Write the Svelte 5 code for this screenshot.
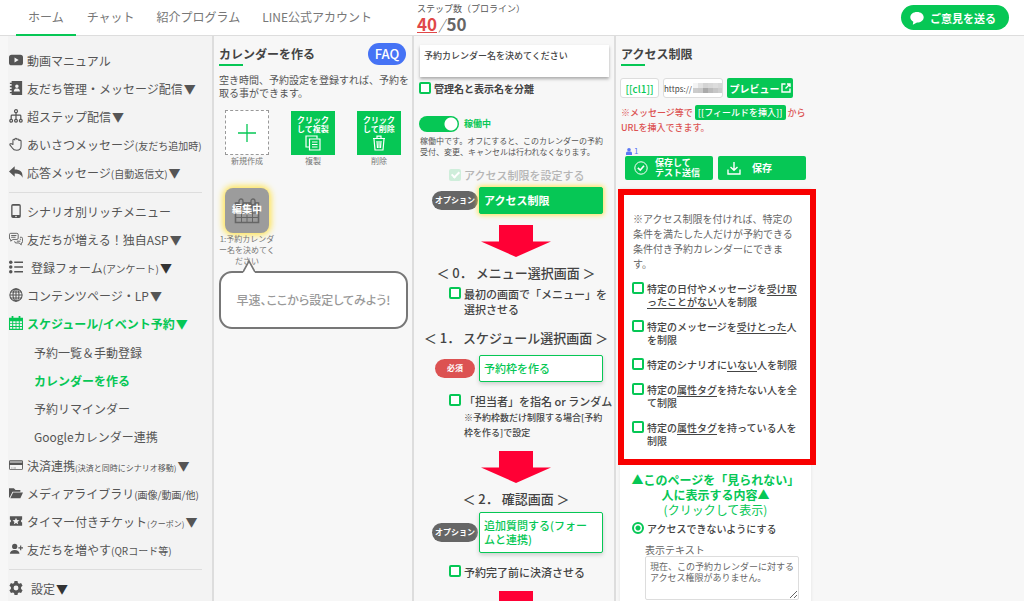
<script>
  const tabs = ['ホーム', 'チャット', '紹介プログラム', 'LINE公式アカウント'];

  const groups = [
    [
      { icon: 'video', text: '動画マニュアル' },
      { icon: 'book', text: '友だち管理・メッセージ配信', more: true },
      { icon: 'tree', text: '超ステップ配信', more: true },
      { icon: 'hand', text: 'あいさつメッセージ', note: '(友だち追加時)' },
      { icon: 'reply', text: '応答メッセージ', note: '(自動返信文)', more: true }
    ],
    [
      { icon: 'phone', text: 'シナリオ別リッチメニュー' },
      { icon: 'chat', text: '友だちが増える！独自ASP', more: true },
      { icon: 'list', text: '登録フォーム', note: '(アンケート)', more: true, dark: true, wide: true },
      { icon: 'globe', text: 'コンテンツページ・LP', more: true },
      {
        icon: 'calendar',
        text: 'スケジュール/イベント予約',
        more: true,
        active: true,
        children: [
          { text: '予約一覧＆手動登録' },
          { text: 'カレンダーを作る', active: true },
          { text: '予約リマインダー' },
          { text: 'Googleカレンダー連携' }
        ]
      },
      { icon: 'card', text: '決済連携', note: '(決済と同時にシナリオ移動)', size: 'tiny', more: true },
      { icon: 'folder', text: 'メディアライブラリ', note: '(画像/動画/他)' },
      { icon: 'ticket', text: 'タイマー付きチケット', note: '(クーポン)', size: 'tiny', more: true },
      { icon: 'adduser', text: '友だちを増やす', note: '(QRコード等)' }
    ],
    [{ icon: 'gear', text: '設定', more: true, dark: true, wide: true }]
  ];

  const limits = [
    ['特定の日付やメッセージを', '受け取ったことがない', '人を制限'],
    ['特定のメッセージを', '受けとった', '人を制限'],
    ['特定のシナリオに', 'いない', '人を制限'],
    ['特定の', '属性タグ', 'を持たない人を全て制限'],
    ['特定の', '属性タグ', 'を持っている人を制限']
  ];

  const mosaic = ['#f4f4f4', '#e2e2e2', '#d4d4d4', '#d8d8d8', '#ddd', '#d8d8d8', '#ccc', '#c9c9c9', '#aaa', '#bbb', '#c6c6c6', '#cecece'];
</script>

{#snippet icon(name)}
  <svg class="icon" viewBox="0 0 16 16" aria-hidden="true" fill="currentColor">
    {#if name === 'video'}
      <path fill-rule="evenodd" d="M3 2h10q3 0 3 3v6q0 3-3 3H3q-3 0-3-3V5q0-3 3-3zM6.3 5.2v5.6L11 8z" />
    {:else if name === 'book'}
      <path fill-rule="evenodd" d="M3 0h12v16H3v-2H1v-1.500h2v-2H1V9h2V7H1V5.500h2v-2H1V2h2zM9 4a2 2 0 100 4 2 2 0 000-4zM5.500 12h7c0-3-2-3.500-3.500-3.500S5.500 9 5.500 12z" />
    {:else if name === 'tree'}
      <g fill="none" stroke="currentColor" stroke-width="1.400"><circle cx="8" cy="2.500" r="1.700" /><path d="M8 4.500V12M2.500 12V8q0-1 1-1h9q1 0 1 1v4" /><circle cx="2.500" cy="13.500" r="1.600" /><circle cx="8" cy="13.500" r="1.600" /><circle cx="13.500" cy="13.500" r="1.600" /></g>
    {:else if name === 'hand'}
      <path fill="none" stroke="currentColor" stroke-width="1.200" stroke-linejoin="round" stroke-linecap="round" d="M4.500 8.500V3.300q1.200-1.300 2.200 0V2q1.200-1.300 2.300 0v.8q1.200-1.200 2.300 0V4q1.500-1 2.500.4V10q0 5.200-5 5.200-3.600 0-5-2.600L1 9q0-1.900 1.800-1.200z" />
    {:else if name === 'reply'}
      <path d="M6.500 1.500v3.700C12.500 5.200 16 7.500 15.500 14.500 14 11 11.500 9.600 6.500 9.700v3.600L0 7.400z" />
    {:else if name === 'phone'}
      <path fill-rule="evenodd" d="M4.500 0h7q2 0 2 2v12q0 2-2 2h-7q-2 0-2-2V2q0-2 2-2zM4 2v10.500h8V2zM8 13.300a.9.9 0 100 1.800.9.9 0 000-1.800z" />
    {:else if name === 'chat'}
      <g fill="none" stroke="currentColor" stroke-width="1"><path d="M2 1.500h7q1.500 0 1.500 1.500v4q0 1.500-1.500 1.500H4.500L2 10.500v-2Q.5 8.500.5 7V3Q.5 1.500 2 1.500zM12.500 6h1.500q1.500 0 1.500 1.500V11q0 1.500-1.500 1.500v2.200L11.500 12.500H8Q6.500 12.500 6.500 11v-.5" /><path d="M2.500 4h6M2.500 6h5M9 10.500h4M12.300 8.300h1.500" /></g>
    {:else if name === 'list'}
      <circle cx="2" cy="2.500" r="2" /><circle cx="2" cy="8" r="2" /><circle cx="2" cy="13.500" r="2" /><path d="M6 1.700h10v1.800H6zM6 7.100h10v1.800H6zM6 12.600h10v1.800H6z" />
    {:else if name === 'globe'}
      <g fill="none" stroke="currentColor" stroke-width="1.200"><circle cx="8" cy="8" r="7" /><ellipse cx="8" cy="8" rx="3.400" ry="7" /><path d="M8 1v14M1 8h14M2 4.500h12M2 11.500h12" /></g>
    {:else if name === 'calendar'}
      <path fill-rule="evenodd" d="M3 0h2v2h6V0h2v2h3v14H0V2h3zM1.200 6v2.200h2.500V6zm3.600 0v2.200h2.700V6zm3.700 0v2.200h2.700V6zm3.800 0v2.200h2.500V6zM1.200 9.200v2.200h2.500V9.200zm3.600 0v2.200h2.700V9.200zm3.700 0v2.200h2.700V9.200zm3.800 0v2.200h2.500V9.200zM1.200 12.500v2.200h2.500v-2.200zm3.600 0v2.200h2.700v-2.200zm3.700 0v2.200h2.700v-2.200zm3.800 0v2.200h2.500v-2.200z" />
    {:else if name === 'card'}
      <path fill-rule="evenodd" d="M1.500 2.500h13q1.500 0 1.500 1.500v8q0 1.500-1.500 1.500h-13Q0 13.500 0 12V4q0-1.500 1.500-1.500zM1 4v1h14V4zm0 4v4.500h14V8zm1.500 3h1.500v.8H2.500zm2.500 0h3v.8H5z" />
    {:else if name === 'folder'}
      <path d="M0 2.500h5.500l2 2H13V6.500H4L.8 13H0zM4.700 7.500H16L13 14H1.500z" />
    {:else if name === 'ticket'}
      <path fill-rule="evenodd" d="M1 2.500h14v3.700a1.900 1.900 0 000 3.600v3.700H1V9.800a1.900 1.900 0 000-3.600zM8 4.200L6.900 6.900 4 7.100l2.200 1.900-.7 2.800L8 10.300l2.500 1.500L9.800 9 12 7.100l-2.900-.2z" />
    {:else if name === 'adduser'}
      <circle cx="6.500" cy="5" r="3" /><path d="M1 13.500c0-3 2.500-4.500 5.500-4.500s5.500 1.500 5.500 4.500zM12.700 4h1.300v2h2v1.300h-2v2h-1.300v-2h-2V6h2z" />
    {:else if name === 'gear'}
      <path fill-rule="evenodd" d="M6.300 0h3.400l.5 2.200 1.400.8 2.200-.7 1.700 3-1.700 1.600v2.200l1.700 1.600-1.700 3-2.200-.7-1.400.8-.5 2.200H6.300l-.5-2.200-1.400-.8-2.200.7-1.700-3 1.700-1.600V6.900L.5 5.300l1.700-3 2.200.7 1.400-.8zM8 5.200a2.800 2.800 0 100 5.600 2.800 2.800 0 000-5.600z" />
    {/if}
  </svg>
{/snippet}

{#snippet arrow()}
  <svg class="arrow" viewBox="0 0 70 32" aria-hidden="true"><path d="M18 0h34v16.500h18L35 32 0 16.500h18z" fill="#ff0035" /></svg>
{/snippet}

<div class="page">
  <header>
    <nav class="tabs">
      {#each tabs as tab, i}
        <a href="#top" class:current={i === 0}>{tab}</a>
      {/each}
    </nav>
    <div class="steps">
      <span>ステップ数（プロライン）</span>
      <div class="count"><a href="#steps">40</a><i>/</i><b>50</b></div>
    </div>
    <button class="feedback">
      <svg viewBox="0 0 14 14" aria-hidden="true"><path d="M7 1c3.800 0 6.700 2.200 6.700 5.300S10.800 11.600 7 11.600L2.800 13.700l.5-3C1.400 9.700.3 8.200.3 6.300.3 3.200 3.200 1 7 1z" fill="#fff" /></svg>
      ご意見を送る
    </button>
  </header>

  <main>
    <aside class="side">
      {#each groups as group}
        <ul class="menu">
          {#each group as item}
            <li>
              <a href="#menu" class:active={item.active} class:wide={item.wide}>
                {@render icon(item.icon)}
                <span>{item.text}{#if item.note}<small class={item.size}>{item.note}</small>{/if}{#if item.more}<span class="more" class:dark={item.dark}>▼</span>{/if}</span>
              </a>
              {#if item.children}
                <ul class="sub">
                  {#each item.children as child}
                    <li><a href="#menu" class:active={child.active}>{child.text}</a></li>
                  {/each}
                </ul>
              {/if}
            </li>
          {/each}
        </ul>
      {/each}
    </aside>

    <section class="col calendars">
      <div class="headrow">
        <h2>カレンダーを作る</h2>
        <button class="faq">FAQ</button>
      </div>
      <p class="lead">空き時間、予約設定を登録すれば、予約を<br />取る事ができます。</p>
      <div class="tiles">
        <div class="cell">
          <button class="tile add" aria-label="新規作成">
            <svg width="18" height="18" viewBox="0 0 18 18"><path d="M9 0v18M0 9h18" stroke="#06c755" stroke-width="1.300" /></svg>
          </button>
          <span>新規作成</span>
        </div>
        <div class="cell">
          <button class="tile green">クリック<br />して複製
            <svg width="16" height="16" viewBox="0 0 16 16" fill="none" stroke="#fff" stroke-width="1.200"><path d="M12 3.500V1H1v11h3" /><path d="M4.500 4h10.500v11H4.500zM7 7h5.500M7 9.500h5.500M7 12h5.500" /></svg>
          </button>
          <span>複製</span>
        </div>
        <div class="cell">
          <button class="tile green">クリック<br />して削除
            <svg width="16" height="16" viewBox="0 0 16 16" fill="none" stroke="#fff" stroke-width="1.200"><path d="M2 3.500h12M6 3V1.200h4V3M3 4l1 11h8l1-11M6 6l.5 7M8 6v7M10 6l-.5 7" /></svg>
          </button>
          <span>削除</span>
        </div>
      </div>
      <div class="tiles second">
        <div class="cell">
          <button class="tile editing">
            <svg width="26" height="26" viewBox="0 0 26 26" fill="none" stroke="#666"><path d="M1.500 5h23v19.500h-23z" stroke-width="1.600" /><path d="M2 4.500h22V10H2z" fill="#666" stroke="none" /><path d="M2 15h22M2 19.500h22M7.500 10v14M13 10v14M18.500 10v14" /><rect x="5" y="1" width="4" height="6" rx="2" fill="#9c9c9c" stroke-width="1.300" /><rect x="17" y="1" width="4" height="6" rx="2" fill="#9c9c9c" stroke-width="1.300" /></svg>
            <b>編集中</b>
          </button>
          <span class="name">1:予約カレンダー名を決めてください</span>
        </div>
      </div>
      <div class="bubble">
        <svg viewBox="0 0 12 13" width="12" height="13" aria-hidden="true"><path d="M0 12L6 1l6 11v1H0z" fill="#fff" /><path d="M0 12L6 1l6 11" fill="none" stroke="#777" stroke-width="1.600" /></svg>
        早速、ここから設定してみよう!
      </div>
    </section>

    <section class="col flow">
      <textarea class="title" aria-label="カレンダー名">予約カレンダー名を決めてください</textarea>
      <label class="check split"><input type="checkbox" /><span>管理名と表示名を分離</span></label>
      <label class="switch"><input type="checkbox" checked /><span>稼働中</span></label>
      <p class="help">稼働中です。オフにすると、このカレンダーの予約受付、変更、キャンセルは行われなくなります。</p>
      <label class="check in locked"><input type="checkbox" checked disabled /><span>アクセス制限を設定する</span></label>
      <div class="step"><span class="pill">オプション</span><button class="solid">アクセス制限</button></div>
      {@render arrow()}
      <h3>＜ 0． メニュー選択画面 ＞</h3>
      <label class="check in"><input type="checkbox" /><span>最初の画面で「メニュー」を選択させる</span></label>
      <h3 class="next">＜ 1． スケジュール選択画面 ＞</h3>
      <div class="step apart"><span class="pill must">必須</span><button>予約枠を作る</button></div>
      <label class="check in below"><input type="checkbox" /><span><span class="line">「担当者」を指名 or ランダム</span><small>※予約枠数だけ制限する場合[予約<wbr />枠を作る]で設定</small></span></label>
      {@render arrow()}
      <h3>＜ 2． 確認画面 ＞</h3>
      <div class="step"><span class="pill">オプション</span><button>追加質問する(フォー<br />ムと連携)</button></div>
      <label class="check in below"><input type="checkbox" /><span>予約完了前に決済させる</span></label>
      {@render arrow()}
    </section>

    <section class="col access">
      <div class="inner">
        <h2>アクセス制限</h2>
        <div class="links">
          <button class="code">[[cl1]]</button>
          <div class="url">
            <input type="text" value="https://" aria-label="URL" />
            <span class="mosaic">{#each mosaic as shade}<i style="background:{shade}"></i>{/each}</span>
          </div>
          <button class="preview">プレビュー<svg width="10" height="10" viewBox="0 0 10 10" fill="none" stroke="#fff" stroke-width="1.400"><path d="M4.500 1H1v8h8V5.500M6 1h3v3M9 1L4.500 5.500" /></svg></button>
        </div>
        <p class="warn">※メッセージ等で <button>[[フィールドを挿入]]</button> から<br />URLを挿入できます。</p>
        <div class="users"><svg width="6" height="7" viewBox="0 0 6 7" fill="currentColor"><circle cx="3" cy="1.800" r="1.800" /><path d="M0 7V5q0-1.500 1.500-1.500h3Q6 3.500 6 5v2z" /></svg>1</div>
        <div class="save">
          <button>
            <svg width="14" height="14" viewBox="0 0 14 14" fill="none" stroke="#fff"><circle cx="7" cy="7" r="6.200" /><path d="M3.800 6.800L6.300 9 10 4.800" stroke-width="1.600" /></svg>
            <span>保存して<br />テスト送信</span>
          </button>
          <button class="plain">
            <svg width="14" height="14" viewBox="0 0 14 14" fill="none" stroke="#fff" stroke-width="1.400"><path d="M7 1v8M3.500 6L7 9.300 10.500 6M1 8.500V13h12V8.500" /></svg>
            <span>保存</span>
          </button>
        </div>
        <div class="panel">
          <div class="marked">
            <p>※アクセス制限を付ければ、特定の条件を満たした人だけが予約できる条件付き予約カレンダーにできます。</p>
            {#each limits as [before, mark, after]}
              <label class="check"><input type="checkbox" /><span>{before}<u>{mark}</u>{after}</span></label>
            {/each}
          </div>
          <button class="fold"><b>▲このページを「見られない」<br />人に表示する内容▲</b><br />(クリックして表示)</button>
          <label class="check radio"><input type="radio" name="deny" checked /><span>アクセスできないようにする</span></label>
          <div class="field">
            <label for="deny-text">表示テキスト</label>
            <textarea id="deny-text">現在、この予約カレンダーに対するアクセス権限がありません。</textarea>
          </div>
        </div>
      </div>
    </section>
  </main>
</div>

<style>
  :global(body) { margin: 0; }
  * { box-sizing: border-box; }
  .page {
    --green: #06c755;
    height: 100vh;
    display: flex;
    flex-direction: column;
    overflow: hidden;
    background: #f7f7f7;
    color: #444;
    font-family: "Noto Sans CJK JP", "Noto Sans", sans-serif;
    font-size: 12px;
  }
  button, input, textarea { font: inherit; color: inherit; margin: 0; }
  button { border: 0; padding: 0; cursor: pointer; }
  a { color: inherit; text-decoration: none; }
  ul { list-style: none; margin: 0; padding: 0; }
  h2, h3, p { margin: 0; }
  svg { display: block; flex: none; }

  header {
    flex: none;
    display: grid;
    grid-template-columns: 417fr 607fr;
    height: 36px;
    background: #fff;
    border-bottom: 1px solid #ddd;
    position: relative;
  }
  .tabs { display: flex; padding-left: 16px; white-space: nowrap; color: #777; }
  .tabs a { padding: 0 11px; line-height: 34px; border-bottom: 2px solid transparent; }
  .tabs .current { border-color: var(--green); padding: 0 12px; }
  .steps { font-size: 9px; line-height: 12px; padding-top: 3px; color: #555; }
  .count { display: flex; align-items: center; font-size: 17px; line-height: 18px; color: #666; }
  .count a { color: #e04848; font-weight: 700; border-bottom: 1px solid; line-height: 17px; }
  .count i { font-size: 14px; font-weight: 300; padding: 0 2px; }
  .feedback {
    position: absolute;
    right: 15px;
    top: 5px;
    display: flex;
    align-items: center;
    gap: 6px;
    height: 25px;
    padding: 0 13px 0 9px;
    border-radius: 13px;
    background: var(--green);
    color: #fff;
    font-weight: 700;
    font-size: 11px;
    line-height: 24px;
  }
  .feedback svg { width: 14px; }

  main {
    flex: 1;
    min-height: 0;
    display: grid;
    grid-template-columns: minmax(0, 214fr) minmax(0, 200fr) minmax(0, 202fr) minmax(0, 408fr);
  }
  .side, .col { overflow: hidden auto; scrollbar-width: none; }
  .side { margin-left: 8px; padding: 10px 10px 0 1px; background: #f3f3f3; border-right: 2px solid #ddd; color: #555; }
  .menu + .menu { border-top: 1px solid #ddd; margin-top: 6px; padding-top: 4px; }
  .menu a { display: flex; align-items: center; gap: 4px; height: 28px; white-space: nowrap; }
  .menu a.wide { gap: 8px; }
  .menu .icon { width: 14px; height: 14px; }
  .menu .active { color: var(--green); font-weight: 700; }
  .menu small { font-size: 10px; }
  .menu small.tiny { font-size: 8px; }
  .more { margin-left: 1px; }
  .dark { color: #333; }
  .sub { padding: 1px 0 1px 25px; }

  .col { border-right: 2px solid #ddd; padding: 9px 0 0; }
  h2 { font-size: 12px; line-height: 18px; font-weight: 700; }
  h2::after { content: ""; display: block; width: 24px; height: 2px; margin-top: 1px; background: var(--green); }

  .calendars { padding-top: 7px; }
  .headrow { display: flex; justify-content: space-between; align-items: flex-start; padding: 0 6px 0 5px; }
  .headrow h2 { padding-top: 2px; }
  .faq { height: 22px; width: 38px; border-radius: 11px; background: #4673f5; color: #fff; font-weight: 500; font-size: 13px; line-height: 20px; }
  .lead { padding-left: 5px; margin-top: 7px; font-size: 10px; line-height: 13px; color: #555; white-space: nowrap; }
  .tiles { display: grid; grid-template-columns: repeat(3, 1fr); margin-top: 11px; }
  .tiles.second { margin-top: 21px; }
  .cell { display: flex; flex-direction: column; align-items: center; font-size: 8px; line-height: 12px; color: #777; text-align: center; }
  .tile { width: 44px; height: 45px; display: flex; flex-direction: column; align-items: center; justify-content: center; }
  .add { background: #fff; border: 1px dashed #999; }
  .green { background: var(--green); color: #fff; font-weight: 700; line-height: 9px; border: 1px solid #f7f7f7; border-width: 1px 0 0; }
  .green svg { margin-top: 2px; }
  .editing { display: grid; place-items: center; background: #9c9c9c; border-radius: 8px; box-shadow: 0 0 6px 2px #ffe34d; color: #fff; font-size: 10px; }
  .editing svg, .editing b { grid-area: 1 / 1; }
  .editing b { padding-bottom: 3px; }
  .name { width: 56px; line-height: 11px; }
  .bubble {
    position: relative;
    margin: 5px 4px 0 5px;
    padding: 18px 0;
    border: 2px solid #777;
    border-radius: 13px;
    background: #fff;
    color: #999;
    font-size: 12px;
    font-weight: 500;
    line-height: 18px;
    text-align: center;
    font-feature-settings: "palt";
    white-space: nowrap;
  }
  .bubble svg { position: absolute; left: 22px; top: -13px; }

  textarea { display: block; outline: 0; }
  .title {
    width: calc(100% - 11px);
    height: 32px;
    margin-left: 6px;
    padding: 4px;
    border: 0;
    background: #fff;
    box-shadow: 0 2px 3px #aaa;
    font-size: 9px;
    font-weight: 500;
    line-height: 14px;
    resize: none;
    overflow: hidden;
  }
  .check { display: flex; gap: 3px; font-weight: 700; }
  .check input {
    appearance: none;
    flex: none;
    width: 12px;
    height: 12px;
    border: 2px solid var(--green);
    border-radius: 2px;
    background: #fff;
  }
  .split { margin: 5px 0 0 5px; font-size: 10px; line-height: 14px; }
  .switch { display: flex; align-items: center; gap: 5px; margin: 20px 0 0 5px; font-size: 9px; line-height: 16px; font-weight: 700; color: var(--green); }
  .switch input { appearance: none; width: 40px; height: 16px; border-radius: 8px; background: radial-gradient(circle at 32px 8px, #fff 6px, transparent 7px) var(--green); }
  .help { margin: 3px 6px 0; font-size: 8px; line-height: 11px; color: #555; }
  .in { padding: 0 6px 0 35px; margin-top: 5px; font-size: 11px; line-height: 15px; font-weight: 500; }
  .in small { display: block; margin-top: 1px; padding-right: 4px; font-size: 9px; }
  .line { white-space: nowrap; }
  .locked { margin-top: 11px; color: #b5b5b5; }
  .locked input { margin-top: 1px; border: 0; background: #cfeedb; }
  .locked input::after { content: ""; display: block; width: 3px; height: 6px; margin: 1px auto; border: solid #fff; border-width: 0 2px 2px 0; rotate: 45deg; }
  .below { margin-top: 12px; }
  .step { display: grid; grid-template-columns: 46px 1fr; align-items: center; gap: 1px; margin: 4px 11px 0 18px; }
  .apart { margin-top: 8px; }
  .pill { height: 19px; border-radius: 10px; background: #666; color: #fff; font-size: 8px; font-weight: 700; line-height: 18px; text-align: center; }
  .must { margin: 0 3px; background: #dc5252; }
  .step button {
    min-height: 26px;
    padding: 5px 4px 6px;
    border: 1px solid var(--green);
    border-radius: 2px;
    background: #fff;
    box-shadow: 0 2px 4px #ccc;
    color: var(--green);
    font-size: 11px;
    font-weight: 500;
    line-height: 14px;
    text-align: left;
  }
  .step .solid { background: var(--green); color: #fff; font-weight: 700; box-shadow: 0 0 5px 1px #ffe34d; }
  .arrow { width: 70px; height: 32px; margin: 11px auto 7px; translate: 2px 0; }
  h3 { padding-left: 4px; font-size: 13px; line-height: 18px; font-weight: 500; text-align: center; white-space: nowrap; }
  .next { margin-top: 12px; }

  .access { border: 0; }
  .inner { max-width: 200px; padding-left: 4px; }
  .inner h2 { padding-left: 1px; }
  .links { display: flex; gap: 4px; height: 20px; margin: 12px 0 7px; }
  .code, .url { border: 1px solid #ddd; border-radius: 3px; background: #fff; }
  .code { width: 39px; font-size: 10px; color: var(--green); font-weight: 500; }
  .url { display: flex; align-items: center; width: 60px; overflow: hidden; }
  .url input { width: 29px; border: 0; padding: 0; background: none; font-size: 8px; outline: 0; }
  .mosaic { display: grid; grid-template-columns: repeat(6, 5px); grid-auto-rows: 5px; }
  .preview { display: flex; align-items: center; justify-content: center; gap: 1px; width: 66px; border-radius: 2px; background: var(--green); color: #fff; font-size: 10px; font-weight: 700; white-space: nowrap; }
  .warn { padding-left: 1px; font-size: 9px; line-height: 15px; font-weight: 500; color: #dc5252; white-space: nowrap; }
  .warn button { padding: 0 3px; border-radius: 2px; background: var(--green); color: #fff; line-height: 15px; }
  .users { display: flex; align-items: center; gap: 2px; margin: 11px 0 0 6px; color: #5b78f5; font-size: 8px; line-height: 10px; }
  .save { display: grid; grid-template-columns: 88px 88px; gap: 5px; padding-left: 5px; }
  .save button { display: flex; align-items: center; gap: 7px; height: 24px; padding-left: 9px; border-radius: 2px; background: var(--green); color: #fff; font-size: 9px; line-height: 10px; font-weight: 700; text-align: left; }
  .save .plain { gap: 11px; font-size: 10px; }
  .panel { margin: 9px 5px 0 0; padding-bottom: 20px; background: #fff; box-shadow: 0 0 3px #e2e2e2; }
  .marked { margin: 0 -5px 0 -2px; padding: 16px 9px 12px 8px; border: 6px solid #f80000; display: flex; flex-direction: column; gap: 12px; font-size: 10px; line-height: 13px; }
  .marked p { line-height: 15px; margin-bottom: -1px; padding-left: 1px; color: #666; }
  .marked .check { font-weight: 500; }
  u { text-underline-offset: 2px; }
  .fold { display: block; width: 100%; margin-top: 7px; background: none; color: var(--green); font-size: 12px; line-height: 15px; white-space: nowrap; }
  .radio { margin: 5px 0 0 12px; font-size: 10px; line-height: 13px; font-weight: 500; }
  .radio input { border-radius: 50%; background: radial-gradient(circle, var(--green) 2px, #fff 3px); }
  .field { margin: 8px 12px 0 25px; font-size: 10px; line-height: 13px; color: #666; }
  .field textarea { width: 100%; height: 44px; padding: 4px 0 4px 4px; border: 1px solid #ddd; border-radius: 2px; background: #fff; font-size: 9px; line-height: 11px; overflow: hidden; }
</style>
